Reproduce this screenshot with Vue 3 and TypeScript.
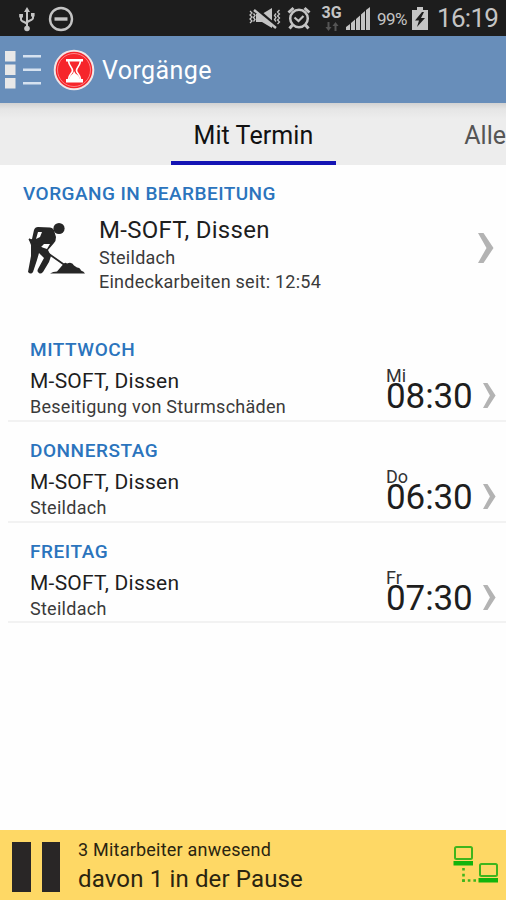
<script setup lang="ts">
interface Appointment {
  day: string
  short: string
  time: string
  customer: string
  task: string
}

const appointments: Appointment[] = [
  { day: 'MITTWOCH', short: 'Mi', time: '08:30', customer: 'M-SOFT, Dissen', task: 'Beseitigung von Sturmschäden' },
  { day: 'DONNERSTAG', short: 'Do', time: '06:30', customer: 'M-SOFT, Dissen', task: 'Steildach' },
  { day: 'FREITAG', short: 'Fr', time: '07:30', customer: 'M-SOFT, Dissen', task: 'Steildach' },
]
</script>

<template>
  <div class="screen">
    <div class="status">
      <svg class="usb" width="18" height="26" viewBox="0 0 18 26" fill="none" stroke="#c4c4c4" stroke-width="2">
        <path d="M9 5v17M3 9v4.500c0 2.500 6 2.500 6 5M15 8v4c0 2.500-6 2.500-6 5" />
        <path d="M9 1l3 5H6zM1.200 8h3.800v3.500H1.200zM13 7h3.600v3.500H13z" fill="#c4c4c4" stroke="none" />
        <circle cx="9" cy="22.500" r="2.800" fill="#c4c4c4" stroke="none" />
      </svg>
      <svg class="dnd" width="26" height="26" viewBox="0 0 26 26" fill="none" stroke="#c4c4c4">
        <circle cx="13" cy="13" r="11" stroke-width="2.400" />
        <path d="M6.500 13h13" stroke-width="3.400" />
      </svg>
      <span class="grow"></span>
      <svg class="mute" width="34" height="24" viewBox="0 0 34 24" fill="none" stroke="#c4c4c4">
        <path d="M8 8h6l10-6v20l-10-6H8z" fill="#c4c4c4" stroke="none" />
        <path d="M7 2l22 19" stroke="#1d1d1d" stroke-width="3.500" />
        <path d="M6 4l22 18" stroke-width="2.400" />
        <path d="M2 5l2 2-2 2 2 2-2 2 2 2-2 2M5.500 7.500l1.500 2-1.500 2 1.500 2-1.500 2M28 7.500l-1.500 2 1.500 2-1.500 2 1.500 2M31.500 4l-2 2 2 2-2 2 2 2-2 2 2 2-2 2" stroke-width="1.300" />
      </svg>
      <svg class="alarm" width="24" height="24" viewBox="0 0 24 24" fill="none" stroke="#c4c4c4">
        <circle cx="12" cy="12.500" r="8.800" stroke-width="2.500" />
        <path d="M7.500 11.500l4 3.500 5-5" stroke-width="2.200" />
        <path d="M1.500 6.500l5-4.500M17.500 2l5 4.500M5.500 19l-3 3.500M18.500 19l3 3.500" stroke-width="3" />
      </svg>
      <span class="network">
        <b>3G</b>
        <svg width="14" height="9" viewBox="0 0 14 9" fill="#555">
          <path d="M2.500 0h2v5h2l-3 4-3-4h2zM9.500 9h2V4h2l-3-4-3 4h2z" />
        </svg>
      </span>
      <svg class="signal" width="24" height="23" viewBox="0 0 24 23" fill="#c4c4c4">
        <path d="M0 23v-3l4-3v6zM5 23v-7l4-3.500V23zM10 23V12l4-3.500V23zM15 23V7.500L19 4v19zM20 23V3l4-3v23z" />
      </svg>
      <span class="percent">99%</span>
      <svg class="battery" width="16" height="23" viewBox="0 0 16 23">
        <path d="M5 0h6v3h5v20H0V3h5z" fill="#c4c4c4" />
        <path d="M10 5L3 13.500h4L5 20l8-9H9l3-6z" fill="#1d1d1d" />
      </svg>
      <span class="clock">16:19</span>
    </div>

    <header class="bar">
      <svg class="menu" width="38" height="38" viewBox="0 0 38 38" fill="#e8e8e8">
        <path d="M0 0h10.500v10.500H0zM0 13.500h10.500V24H0zM0 27h10.500v10.500H0z" />
        <path d="M18 4h18v2.500H18zM18 17.500h18V20H18zM18 31h18v2.500H18z" fill="#d6e2f0" />
      </svg>
      <svg class="logo" width="42" height="42" viewBox="0 0 42 42">
        <circle cx="21" cy="21" r="20.300" fill="#f2e6e8" />
        <circle cx="21" cy="21" r="18.300" fill="#f6252b" />
        <circle cx="21" cy="21" r="16.500" fill="none" stroke="#ff8a8c" stroke-width=".9" />
        <path d="M13 10h17v2.500H13zM13 30h17v3.500H13z" fill="#fff" />
        <path d="M15.500 12c.5 5 4 6.500 4 9.500s-4 4-4 9M27.500 12c-.5 5-4 6.500-4 9.500s4 4 4 9" fill="none" stroke="#fff" stroke-width="1.700" />
        <path d="M21 22l1.500 2.500c2.500 1.500 4 3 4.500 6H16c.5-3 2-4.500 4-6z" fill="#fff" />
      </svg>
      <h1>Vorgänge</h1>
    </header>

    <nav class="tabs">
      <span class="tab active">Mit Termin</span>
      <span class="tab next">Alle</span>
    </nav>

    <section class="current">
      <h2>VORGANG IN BEARBEITUNG</h2>
      <div class="job">
        <svg class="worker" width="60" height="54" viewBox="0 0 60 54" fill="#262626">
          <circle cx="32" cy="6.500" r="5.600" />
          <path d="M7 8Q8 5 11 5L23 5.500Q27 6 27.500 10L29 15Q29 19 27 21L21 28L24 34L22 40L16 50Q13 53 11 50Q10 49 11 47L17 36L12 31L10 38L6 50Q4 53 1 50L4 34V23L2 18L5 17zM11 10L9 17L13 15L15 10zM17 22L14 25L20 27L23 22z" fill-rule="evenodd" />
          <path d="M2 17L22 32L39 44" fill="none" stroke="#262626" stroke-width="1.800" />
          <path d="M23 51.500q3-2 7-2l6-7q2-3 4-1q5-2 7 2l3 2q3 0 4 3q3 1 4 3z" />
        </svg>
        <div class="job-text">
          <div class="customer">M-SOFT, Dissen</div>
          <div class="detail">Steildach</div>
          <div class="detail">Eindeckarbeiten seit: 12:54</div>
        </div>
        <svg class="chevron" width="16" height="30" viewBox="0 0 16 30" fill="#b3b3b3">
          <path d="M0 0h5.500L15.500 15 5.500 30H0L8.500 15z" />
        </svg>
      </div>
    </section>

    <main class="list">
      <article v-for="item in appointments" :key="item.day" class="row">
        <div class="info">
          <h3>{{ item.day }}</h3>
          <div class="name">{{ item.customer }}</div>
          <div class="task">{{ item.task }}</div>
        </div>
        <div class="when">
          <span class="short">{{ item.short }}</span>
          <span class="time">{{ item.time }}</span>
        </div>
        <svg class="chevron" width="13" height="25" viewBox="0 0 16 30" preserveAspectRatio="none" fill="#b3b3b3">
          <path d="M0 0h5.500L15.500 15 5.500 30H0L8.500 15z" />
        </svg>
      </article>
    </main>

    <footer class="footer">
      <div class="pause"><i></i><i></i></div>
      <div class="staff">
        <div class="present">3 Mitarbeiter anwesend</div>
        <div class="break">davon 1 in der Pause</div>
      </div>
      <svg class="link" width="46" height="40" viewBox="0 0 46 40" fill="none" stroke="#3fb51c" stroke-width="2">
        <rect x="2" y="2" width="17" height="12" rx="1.500" />
        <rect x="27" y="19" width="17" height="12" rx="1.500" />
        <path d="M.5 16h19.500v4.500H.5zM25.500 33H45v4.500H25.500z" fill="#12b40c" stroke="none" />
        <path d="M10.500 23v14" stroke-width="2.600" stroke-dasharray="2.600 3.200" />
        <path d="M9.200 35.500h16" stroke-width="2.600" stroke-dasharray="2.600 3" />
      </svg>
    </footer>
  </div>
</template>

<style>
body {
  margin: 0;
}
</style>

<style scoped>
.screen {
  width: 506px;
  height: 900px;
  display: flex;
  flex-direction: column;
  overflow: hidden;
  background: #fefefe;
  color: #1e1e1e;
  font-family: Roboto, sans-serif;
  white-space: nowrap;
}
svg {
  display: block;
  flex: none;
}
h1, h2, h3 {
  margin: 0;
}
.status {
  height: 36px;
  flex: none;
  display: flex;
  align-items: center;
  box-sizing: border-box;
  padding: 0 9px 0 18px;
  background: #1d1d1d;
  color: #c4c4c4;
}
.usb { margin-top: 1px; }
.dnd { margin: 1px 0 0 12px; }
.grow { flex: 1; }
.alarm { margin-left: 5px; }
.network {
  width: 21px;
  margin-left: 10px;
  display: flex;
  flex-direction: column;
  align-items: center;
  gap: 1px;
}
.network b {
  font: 700 16px/16px Roboto, sans-serif;
}
.signal { margin-left: 4px; }
.percent {
  width: 31px;
  margin: 1px 0 0 7px;
  font-size: 17px;
  letter-spacing: -0.6px;
}
.battery { margin-left: 4px; }
.clock {
  width: 60px;
  margin-left: 9px;
  font-size: 26px;
  letter-spacing: -0.7px;
  line-height: 36px;
}
.bar {
  height: 67px;
  flex: none;
  display: flex;
  align-items: center;
  padding-left: 5px;
  background: #688eba;
}
.logo { margin-left: 10px; }
h1 {
  margin-left: 7px;
  padding-top: 1px;
  font-size: 25px;
  font-weight: 400;
  letter-spacing: 0.4px;
  color: #fff;
}
.tabs {
  height: 62px;
  flex: none;
  display: flex;
  align-items: stretch;
  padding-left: 171px;
  background: linear-gradient(#d2d2d2 0, #e5e5e5 6px, #ededed 16px);
}
.tab {
  box-sizing: border-box;
  font-size: 25px;
  line-height: 66px;
}
.active {
  width: 165.500px;
  padding-left: 22.500px;
  border-bottom: 4px solid #1414b4;
  color: #111;
  letter-spacing: 0.08px;
}
.next {
  margin-left: 128.500px;
  color: #555;
}
.current {
  height: 156px;
  flex: none;
  padding: 17px 12px 0 23px;
  box-sizing: border-box;
}
h2, h3 {
  font-size: 19px;
  font-weight: 500;
  line-height: 24px;
  letter-spacing: 0.45px;
  color: #2b74bd;
}
h3 {
  letter-spacing: 0.55px;
}
.job {
  display: flex;
}
.worker { margin: 16px 0 0 4px; }
.job-text {
  flex: 1;
  margin-left: 12px;
}
.customer {
  font-size: 24px;
  line-height: 30px;
  padding: 9px 0 1px;
  letter-spacing: 0.3px;
}
.detail {
  font-size: 18px;
  line-height: 24px;
  letter-spacing: 0.25px;
  color: #3a3a3a;
}
.job .chevron { margin-top: 27px; }
.row {
  height: 100.800px;
  box-sizing: border-box;
  margin-left: 8px;
  padding: 17px 10px 0 22px;
  display: flex;
  border-bottom: 2px solid #f2f2f2;
}
.list { flex: 1; }
.info { flex: 1; }
.name {
  margin-top: 5px;
  font-size: 21px;
  line-height: 28px;
  letter-spacing: 0.25px;
}
.task {
  font-size: 18px;
  line-height: 24px;
  letter-spacing: 0.27px;
  color: #3a3a3a;
}
.when {
  width: 97px;
  display: flex;
  flex-direction: column;
}
.short {
  margin-top: 31px;
  font-size: 18px;
  line-height: 14px;
  color: #333;
}
.time {
  margin-top: -6px;
  font-size: 35px;
  line-height: 40px;
  letter-spacing: -0.1px;
}
.row .chevron { margin-top: 45px; }
.footer {
  height: 70px;
  flex: none;
  display: flex;
  padding: 0 7px 0 12px;
  box-sizing: border-box;
  background: #fed865;
}
.pause {
  display: flex;
  gap: 11px;
  padding-top: 12px;
}
.pause i {
  width: 18.500px;
  height: 50px;
  background: #292626;
}
.staff {
  flex: 1;
  margin-left: 18px;
  color: #2a2410;
}
.present {
  margin-top: 8px;
  font-size: 18px;
  line-height: 24px;
  letter-spacing: 0.22px;
}
.break {
  font-size: 24px;
  line-height: 34px;
  letter-spacing: 0.15px;
}
.link { margin-top: 15px; }
</style>
